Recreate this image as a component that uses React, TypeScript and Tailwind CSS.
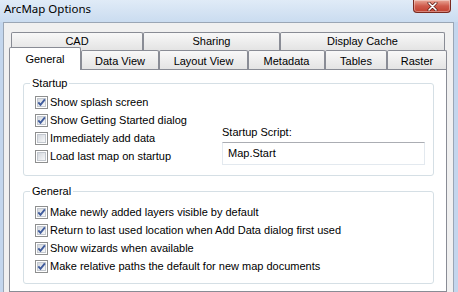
import React from 'react';

const topTabs = [
  { label: 'CAD', w: 'w-[132px]' },
  { label: 'Sharing', w: 'w-[137px]' },
  { label: 'Display Cache', w: 'w-[165px]' },
];

const bottomTabs = [
  { label: 'Data View', w: 'w-[78px]' },
  { label: 'Layout View', w: 'w-[89px]' },
  { label: 'Metadata', w: 'w-[77px]' },
  { label: 'Tables', w: 'w-[62px]' },
  { label: 'Raster', w: 'w-[60px]' },
];

const startupItems = [
  { label: 'Show splash screen', checked: true },
  { label: 'Show Getting Started dialog', checked: true },
  { label: 'Immediately add data', checked: false },
  { label: 'Load last map on startup', checked: false },
];

const generalItems = [
  'Make newly added layers visible by default',
  'Return to last used location when Add Data dialog first used',
  'Show wizards when available',
  'Make relative paths the default for new map documents',
];

function CheckBox({ checked }: { checked: boolean }) {
  return (
    <span className="relative flex h-[13px] w-[13px] shrink-0 items-center justify-center border border-[#8e8f8f] bg-white">
      <span className="h-[9px] w-[9px] border border-[#c3c8cf] bg-gradient-to-br from-[#d4d8de] to-[#f7f8f9]" />
      {checked && (
        <svg className="absolute left-0 top-0 h-[11px] w-[11px]" viewBox="0 0 11 11">
          <path d="M2.3 5.3 L4.5 7.8 L8.9 2.4" fill="none" stroke="#3f5b9c" strokeWidth="1.9" />
        </svg>
      )}
    </span>
  );
}

function CheckRow({ label, checked }: { label: string; checked: boolean }) {
  return (
    <div className="flex h-[18px] items-center">
      <CheckBox checked={checked} />
      <span className="ml-[2px] whitespace-nowrap">{label}</span>
    </div>
  );
}

export default function App() {
  return (
    <div className="flex h-[292px] w-[458px] flex-col overflow-hidden bg-[#c3d6ed] font-['Liberation_Sans',Arial,sans-serif] text-[11px] leading-[13px] text-black">
      {/* title bar */}
      <div className="flex h-[22px] shrink-0 items-start justify-between bg-gradient-to-b from-[#e0ebf7] to-[#cadcf0]">
        <span className="pl-[4px] pt-[1px] font-['Noto_Sans',sans-serif] text-[11.5px] leading-[16px]">
          ArcMap Options
        </span>
        <div className="mr-[7px] flex h-[13px] w-[38px] items-center justify-center rounded-b-[4px] border border-t-0 border-[#7a2a20] bg-gradient-to-b from-[#e8a898] via-[#cf5b4c] to-[#c2412f] shadow-[inset_0_0_0_1px_rgba(255,255,255,0.35)]">
          <svg width="11" height="9" viewBox="0 0 11 9">
            <path d="M2 1 L9 8 M9 1 L2 8" stroke="#5a1b14" strokeWidth="3" strokeLinecap="round" />
            <path d="M2 1 L9 8 M9 1 L2 8" stroke="#ffffff" strokeWidth="1.6" strokeLinecap="round" />
          </svg>
        </div>
      </div>

      {/* client */}
      <div className="flex flex-1 pl-[3px]">
        <div className="flex w-[451px] flex-col border-l border-r border-t border-[#9aa6b5] bg-[#f0f0f0] pt-[9px]">
          {/* tab row 1 */}
          <div className="flex pl-[7px]">
            {topTabs.map((t) => (
              <div
                key={t.label}
                className={`${t.w} h-[18px] rounded-t-[2px] border border-b-0 border-[#898c95] bg-gradient-to-b from-[#f8f8f8] to-[#e4e4e4] pt-[2px] text-center`}
              >
                {t.label}
              </div>
            ))}
          </div>

          {/* tab row 2 */}
          <div className="flex h-[19px] items-end pl-[5px]">
            <div className="relative z-10 mb-[-1px] h-[23px] w-[72px] rounded-t-[2px] border border-b-0 border-[#898c95] bg-white pt-[5px] text-center">
              General
            </div>
            {bottomTabs.map((t) => (
              <div
                key={t.label}
                className={`${t.w} h-[19px] rounded-t-[2px] border border-b-0 border-[#898c95] bg-gradient-to-b from-[#f8f8f8] to-[#e4e4e4] pt-[4px] text-center`}
              >
                {t.label}
              </div>
            ))}
          </div>

          {/* panel */}
          <div className="ml-[5px] flex w-[438px] flex-1 flex-col border border-[#898c95] bg-white">
            <fieldset className="ml-[13px] mt-[7px] w-[411px] rounded-[3px] border border-[#d5dfe5]">
              <legend className="ml-[6px] px-[2px] leading-[13px]">Startup</legend>
              <div className="flex pb-[10px] pl-[11px] pt-[3px]">
                <div className="flex w-[187px] flex-col">
                  {startupItems.map((it) => (
                    <CheckRow key={it.label} label={it.label} checked={it.checked} />
                  ))}
                </div>
                <div className="flex flex-col justify-end">
                  <span className="mb-[3px]">Startup Script:</span>
                  <div className="flex h-[23px] w-[203px] items-center border border-[#e3e9ef] border-t-[#abadb3] pl-[5px]">
                    Map.Start
                  </div>
                </div>
              </div>
            </fieldset>

            <fieldset className="ml-[13px] mt-[9px] w-[411px] rounded-[3px] border border-[#d5dfe5]">
              <legend className="ml-[6px] px-[2px] leading-[13px]">General</legend>
              <div className="flex flex-col pb-[8px] pl-[11px] pt-[5px]">
                {generalItems.map((label) => (
                  <CheckRow key={label} label={label} checked={true} />
                ))}
              </div>
            </fieldset>
          </div>
        </div>
      </div>
    </div>
  );
}
